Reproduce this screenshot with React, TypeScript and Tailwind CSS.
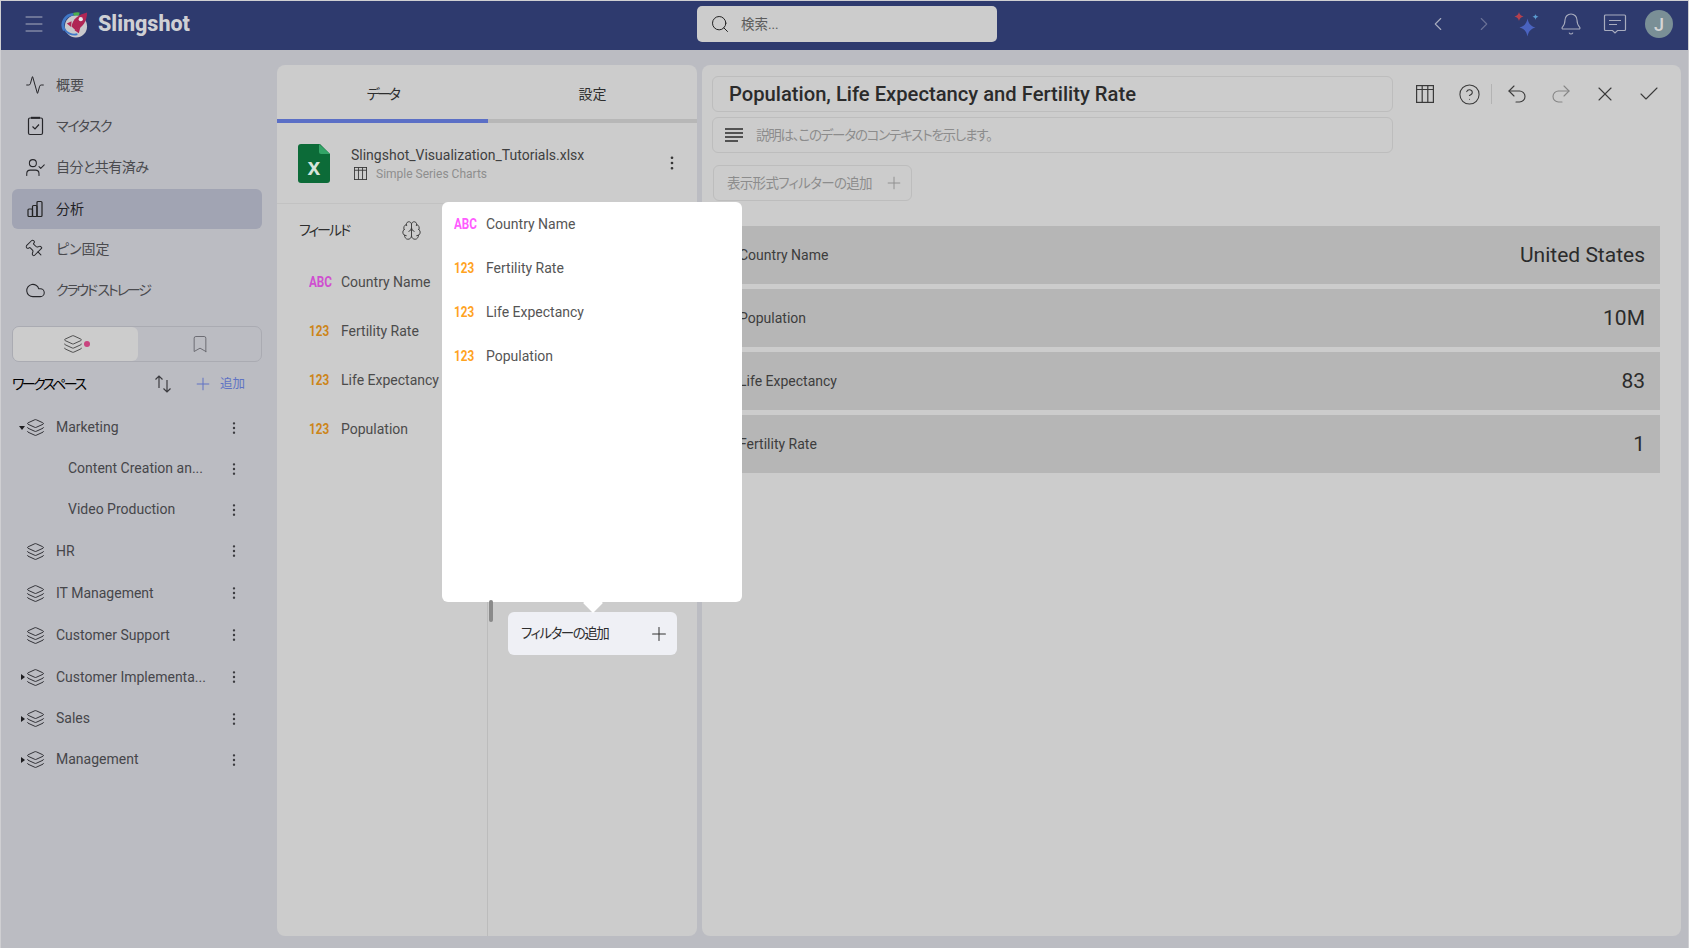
import React from "react";
import { Activity, Bell, Bookmark, Brain, Check, ChevronLeft, ChevronRight, Cloud, EllipsisVertical, Layers, Menu, Plus, Search, Undo2, Redo2, X, Pin, UserCheck, CircleHelp } from "lucide-react";

const F = { fontFamily: "Roboto, 'Noto Sans CJK JP', sans-serif" } as const;

function TableIcon({ className = "" }: { className?: string }) {
  return (
    <svg viewBox="0 0 18 18" className={className} fill="none" stroke="currentColor" strokeWidth="1.2">
      <rect x="0.6" y="0.6" width="16.8" height="16.8" />
      <path d="M0.6 4.5H17.4M6.2 0.6V17.4M11.8 0.6V17.4" />
    </svg>
  );
}

function Bars({ icon, label, track = "" }: { icon: React.ReactNode; label: string; track?: string }) {
  return (
    <div className="flex h-[41px] items-center pb-px pl-[13px] text-[14px] text-[#4a4a4e]">
      <span className="flex w-[31px] text-[#26262a]">{icon}</span>
      <span className={track}>{label}</span>
    </div>
  );
}

function TreeRow({ label, h, arrow, child }: { label: string; h: string; arrow?: "down" | "right"; child?: boolean }) {
  return (
    <div className={`flex items-center pr-[21px] text-[14px] text-[#46464a] ${h}`}>
      <span className="flex w-[25px] shrink-0 justify-end pr-[1px]">
        {arrow === "down" && <span className="h-0 w-0 border-x-[3.5px] border-t-[4px] border-x-transparent border-t-[#1d1d20]" />}
        {arrow === "right" && <span className="h-0 w-0 border-y-[3.5px] border-l-[4px] border-y-transparent border-l-[#1d1d20]" />}
      </span>
      {child ? <span className="w-[42px] shrink-0" /> : <span className="w-[30px] shrink-0"><Layers size={19} strokeWidth={1.2} className="text-[#2b2b30]" /></span>}
      <span className="min-w-0 flex-1 truncate">{label}</span>
      <EllipsisVertical size={16} strokeWidth={1.6} className="ml-2 shrink-0 text-[#3a3a3e]" />
    </div>
  );
}

function TypeTag({ type, dim }: { type: "ABC" | "123"; dim?: boolean }) {
  const color = type === "ABC" ? (dim ? "text-[#cf4fd0]" : "text-[#ff5cff]") : dim ? "text-[#cc8519]" : "text-[#ffa31f]";
  return (
    <span className={`inline-block w-[22px] origin-left scale-x-[0.78] whitespace-nowrap text-[15px] font-bold ${color}`}>{type}</span>
  );
}

function FieldRow({ type, label, dim }: { type: "ABC" | "123"; label: string; dim?: boolean }) {
  return (
    <div className={`flex items-center gap-[10px] whitespace-nowrap text-[14px] ${dim ? "h-[49px] text-[#4b4b4b]" : "h-[44px] text-[#555555]"}`}>
      <TypeTag type={type} dim={dim} />
      {label}
    </div>
  );
}

function DataRow({ label, value }: { label: string; value: string }) {
  return (
    <div className="flex h-[58px] items-center justify-between bg-[#b6b6b6] pl-[17px] pr-[15px]">
      <span className="text-[14px] text-[#3d3d3d]">{label}</span>
      <span className="pt-px text-[21px] text-[#2b2b2b]">{value}</span>
    </div>
  );
}

function Logo() {
  return (
    <svg viewBox="0 0 28 28" className="h-[27px] w-[27px]">
      <circle cx="15.500" cy="16" r="11.500" fill="#c9c9cc" />
      <path d="M3.500 20 A11 11 0 0 1 13 3.500" fill="none" stroke="#3f78c8" strokeWidth="3" />
      <path d="M13 3.500 A11 11 0 0 1 19 3" fill="none" stroke="#4caf50" strokeWidth="3" />
      <path d="M3 18 A12 12 0 0 0 17 24" fill="none" stroke="#3f78c8" strokeWidth="2" />
      <path d="M11 16 C12 8 18 4 27 1.500 C27 10 23 17 15 20 Z" fill="#b02655" />
      <circle cx="20.500" cy="8.500" r="2.200" fill="#e7e7ea" />
      <path d="M11 10.500 L6 13 L10.500 16.500 Z M20 17 L18.500 23 L14 20 Z" fill="#b02655" />
    </svg>
  );
}

function Sparkle() {
  return (
    <svg viewBox="0 0 26 26" className="h-[26px] w-[26px]">
      <path d="M13.500 7.500 C14.500 12.500 16.500 15 21.500 16.500 C16.500 18 14.500 20.500 13.500 25.500 C12.500 20.500 10.500 18 5.500 16.500 C10.500 15 12.500 12.500 13.500 7.500Z" fill="#4a63c0" />
      <path d="M5 1 C5.500 3.500 6.500 4.500 9.500 5.500 C6.500 6.500 5.500 7.500 5 10 C4.500 7.500 3.500 6.500 .5 5.500 C3.500 4.500 4.500 3.500 5 1Z" fill="#b4404e" />
      <path d="M21.500 3 C21.800 4.500 22.500 5.200 24.500 5.800 C22.500 6.300 21.800 7 21.500 9 C21.200 7 20.500 6.300 18.500 5.800 C20.500 5.200 21.200 4.500 21.500 3Z" fill="#5b9bd0" />
    </svg>
  );
}

function ChatIcon() {
  return (
    <svg viewBox="0 0 24 24" className="h-[24px] w-[24px]" fill="none" stroke="#a8acbe" strokeWidth="1.2">
      <path d="M2.500 3H21.500A1 1 0 0 1 22.500 4V17.500A1 1 0 0 1 21.500 18.500H14.500L12 21L9.500 18.500H2.500A1 1 0 0 1 1.500 17.500V4A1 1 0 0 1 2.500 3Z" />
      <path d="M6 8.500H18M6 12.500H14" />
    </svg>
  );
}

export default function App() {
  return (
    <div style={F} className="relative flex h-[948px] w-[1689px] flex-col overflow-hidden border-l border-r border-t border-[#cfcfd2] bg-[#bbbcc2] [font-feature-settings:'palt']">
      <header className="flex h-[49px] shrink-0 items-center bg-[#2e3a6e] pb-[3px] pl-[21px]">
        <Menu size={24} strokeWidth={1} className="text-[#a9adbf]" />
        <span className="ml-[15px] flex"><Logo /></span>
        <span className="ml-[10px] w-[98px] text-[21.500px] font-extrabold leading-none text-[#cfd0d4]">Slingshot</span>
        <div className="ml-[501px] flex h-[36px] w-[300px] items-center rounded-[5px] bg-[#cccccc] pl-[13px] text-[13.500px] text-[#5c5c5c]">
          <Search size={20} strokeWidth={1.2} className="text-[#222]" />
          <span className="ml-[11px]">検索...</span>
        </div>
        <div className="ml-auto flex items-center pr-[15px]">
          <ChevronLeft size={22} strokeWidth={1.2} className="text-[#a8acbe]" />
          <ChevronRight size={22} strokeWidth={1.2} className="ml-[24px] text-[#6a7196]" />
          <span className="ml-[19px] flex"><Sparkle /></span>
          <Bell size={24} strokeWidth={1.1} className="ml-[19px] text-[#a8acbe]" />
          <span className="ml-[20px] flex"><ChatIcon /></span>
          <span className="ml-[18px] flex h-[28px] w-[28px] items-center justify-center rounded-full bg-[#7a8f96] text-[18px] font-medium text-[#d5d5d5]">J</span>
        </div>
      </header>

      <div className="flex min-h-0 flex-1">
        <aside className="w-[276px] shrink-0 pt-[15px]">
          <div className="ml-[11px] w-[250px]">
            <Bars label="概要" icon={<Activity size={20} strokeWidth={1.2} />} />
            <Bars
              label="マイタスク"
              track="tracking-[-1.3px]"
              icon={
                <svg viewBox="0 0 20 20" className="h-[20px] w-[20px]" fill="none" stroke="currentColor" strokeWidth="1.2">
                  <rect x="3.500" y="2" width="14" height="16.500" rx="1.500" />
                  <path d="M6 1.800H15" strokeWidth="2" />
                  <path d="M7.500 10.500L10 13L14 8.500" />
                </svg>
              }
            />
            <Bars label="自分と共有済み" track="tracking-[-0.5px]" icon={<UserCheck size={21} strokeWidth={1.2} />} />
            <div className="h-[41px] pt-px">
              <div className="flex h-[40px] items-center rounded-[6px] bg-[#a1a4b3] pl-[13px] text-[14px] text-[#222226]">
                <span className="flex w-[31px]">
                  <svg viewBox="0 0 20 20" className="h-[20px] w-[20px]" fill="none" stroke="#222" strokeWidth="1.2"><rect x="3" y="10" width="4.500" height="7.500" rx="1" /><rect x="7.500" y="6.500" width="4.500" height="11" rx="1" /><rect x="12" y="2.500" width="5" height="15" rx="1" /></svg>
                </span>
                分析
              </div>
            </div>
            <Bars label="ピン固定" icon={<Pin size={20} strokeWidth={1.2} className="-rotate-45" />} />
            <Bars label="クラウド ストレージ" track="tracking-[-2.1px]" icon={<Cloud size={21} strokeWidth={1.2} />} />
            <div className="mt-[15px] flex h-[36px] rounded-[7px] border border-[#aaabb2]">
              <div className="flex w-[125px] items-center justify-center gap-[1px] rounded-[6px] bg-[#cccccc] pl-[2px]">
                <Layers size={20} strokeWidth={1.1} className="text-[#444]" />
                <span className="h-[6px] w-[6px] rounded-full bg-[#c9447f]" />
              </div>
              <div className="flex flex-1 items-center justify-center">
                <Bookmark size={20} strokeWidth={1.1} className="text-[#66666c]" />
              </div>
            </div>
            <div className="mt-[10px] flex h-[24px] items-center">
              <span className="w-[142px] text-[14px] tracking-[-2.5px] text-black">ワークスペース</span>
              <svg viewBox="0 0 18 18" className="h-[18px] w-[18px] text-[#3c3c40]" fill="none" stroke="currentColor" strokeWidth="1.2">
                <path d="M5 13V1M1.500 4.500L5 1L8.500 4.500M13 5V17M9.500 13.500L13 17L16.500 13.500" />
              </svg>
              <Plus size={20} strokeWidth={1.2} className="ml-[21px] text-[#6073c4]" />
              <span className="ml-[7px] text-[12.500px] text-[#6073c4]">追加</span>
            </div>
          </div>
          <div className="mt-[11px] w-[262px]">
            <TreeRow label="Marketing" h="h-[41px]" arrow="down" />
            <TreeRow label="Content Creation an..." h="h-[41px]" child />
            <TreeRow label="Video Production" h="h-[41px]" child />
            <TreeRow label="HR" h="h-[42px]" />
            <TreeRow label="IT Management" h="h-[42px]" />
            <TreeRow label="Customer Support" h="h-[42px]" />
            <TreeRow label="Customer Implementa..." h="h-[42px]" arrow="right" />
            <TreeRow label="Sales" h="h-[41px]" arrow="right" />
            <TreeRow label="Management" h="h-[41px]" arrow="right" />
          </div>
        </aside>

        <section className="relative mt-[15px] flex h-[871px] w-[420px] shrink-0 flex-col rounded-[8px] bg-[#cccccc]">
          <div className="flex h-[54px] items-center pt-[4px] text-[14px] text-[#2e2e2e]">
            <span className="flex-1 text-center tracking-[-2.5px]">データ</span>
            <span className="w-[209px] text-center">設定</span>
          </div>
          <div className="flex h-[4px] bg-[#b7b7b7]"><div className="w-[211px] bg-[#5b6fc6]" /></div>
          <div className="flex h-[81px] items-center border-b border-[#c2c2c2] pl-[21px] pr-[16px]">
            <svg viewBox="0 0 32 39" className="h-[39px] w-[32px]">
              <path d="M3 0H22L32 10V36A3 3 0 0 1 29 39H3A3 3 0 0 1 0 36V3A3 3 0 0 1 3 0Z" fill="#0c6b38" />
              <path d="M21 0L32 10H23A2 2 0 0 1 21 8Z" fill="#33a467" />
              <text x="16" y="31" textAnchor="middle" fontSize="23" fontWeight="700" fill="#d5e5da" fontFamily="'Liberation Sans', sans-serif">x</text>
            </svg>
            <div className="ml-[21px] flex-1 pt-[2px]">
              <div className="text-[14px] leading-[19px] text-[#3f3f3f]">Slingshot_Visualization_Tutorials.xlsx</div>
              <div className="flex items-center text-[12px] leading-[18px] text-[#8e8e8e]">
                <TableIcon className="ml-[3px] h-[13px] w-[13px] text-[#333]" />
                <span className="ml-[9px]">Simple Series Charts</span>
              </div>
            </div>
            <EllipsisVertical size={18} strokeWidth={1.6} className="text-[#333]" />
          </div>
          <div className="flex min-h-0 flex-1">
            <div className="w-[211px] border-r border-[#bcbcbc] pl-[21px]">
              <div className="flex h-[52px] items-center text-[14px] text-[#2e2e2e]">
                <span className="w-[103px] pl-px tracking-[-2px]">フィールド</span>
                <Brain size={21} strokeWidth={1.1} className="text-[#3c3c3c]" />
              </div>
              <div className="pl-[11px] pt-[2px]">
                <FieldRow dim type="ABC" label="Country Name" />
                <FieldRow dim type="123" label="Fertility Rate" />
                <FieldRow dim type="123" label="Life Expectancy" />
                <FieldRow dim type="123" label="Population" />
              </div>
            </div>
            <div className="flex-1 pl-[20px] pt-[408px]">
              <div className="flex h-[43px] w-[169px] items-center justify-between rounded-[6px] bg-[#eff0f5] pl-[13px] pr-[7px] text-[13.500px] text-[#2e2e2e]">
                <span className="tracking-[-1.5px]">フィルターの追加</span>
                <Plus size={22} strokeWidth={1.1} className="text-[#333]" />
              </div>
            </div>
          </div>
        </section>

        <section className="ml-[5px] mt-[15px] h-[871px] w-[979px] shrink-0 rounded-[8px] bg-[#cccccc] px-[10px] pt-[11px]">
          <div className="flex items-start">
            <div className="w-[681px]">
              <div className="flex h-[36px] items-center rounded-[6px] border border-[#bdbdbd] pl-[16px] text-[20.200px] font-medium text-[#2b2b2b]">
                Population, Life Expectancy and Fertility Rate
              </div>
              <div className="mt-[5px] flex h-[36px] items-center rounded-[6px] border border-[#bdbdbd] pl-[12px] text-[13.500px] text-[#8c8c8c]">
                <svg viewBox="0 0 18 14" className="h-[14px] w-[18px]" fill="none" stroke="#2a2a2a" strokeWidth="1.300"><path d="M0 1H18M0 5H18M0 9H18M0 13H13" /></svg>
                <span className="ml-[13px] tracking-[-1.2px]">説明は、このデータのコンテキストを示します。</span>
              </div>
            </div>
            <div className="ml-[23px] flex h-[36px] items-center text-[#3a3a3a]">
              <TableIcon className="h-[18px] w-[18px]" />
              <CircleHelp size={23} strokeWidth={1.1} className="ml-[24px]" />
              <span className="ml-[10px] h-[20px] w-px bg-[#b3b3b3]" />
              <Undo2 size={24} strokeWidth={1.1} className="ml-[13px]" />
              <Redo2 size={24} strokeWidth={1.1} className="ml-[20px] text-[#858585]" />
              <X size={24} strokeWidth={1.1} className="ml-[20px]" />
              <Check size={24} strokeWidth={1.1} className="ml-[20px]" />
            </div>
          </div>
          <div className="ml-[1px] mt-[12px] flex h-[36px] w-[199px] items-center justify-between whitespace-nowrap rounded-[6px] border border-[#bdbdbd] pl-[13px] pr-[7px] text-[13.500px] text-[#8c8c8c]">
            <span className="tracking-[-0.7px]">表示形式フィルターの追加</span>
            <Plus size={20} strokeWidth={1.1} className="shrink-0 text-[#8c8c8c]" />
          </div>
          <div className="ml-[10px] mt-[25px] flex w-[938px] flex-col gap-[5px]">
            <DataRow label="Country Name" value="United States" />
            <DataRow label="Population" value="10M" />
            <DataRow label="Life Expectancy" value="83" />
            <DataRow label="Fertility Rate" value="1" />
          </div>
        </section>
      </div>

      <div className="absolute left-[441px] top-[201px] h-[400px] w-[300px] rounded-[6px] bg-white pl-[12px]">
        <FieldRow type="ABC" label="Country Name" />
        <FieldRow type="123" label="Fertility Rate" />
        <FieldRow type="123" label="Life Expectancy" />
        <FieldRow type="123" label="Population" />
        <span className="absolute left-[144px] top-[394px] h-[14px] w-[14px] rotate-45 bg-white" />
      </div>
      <span className="absolute left-[488px] top-[599px] h-[22px] w-[4px] rounded-[2px] bg-[#8a8a8a]" />
    </div>
  );
}
